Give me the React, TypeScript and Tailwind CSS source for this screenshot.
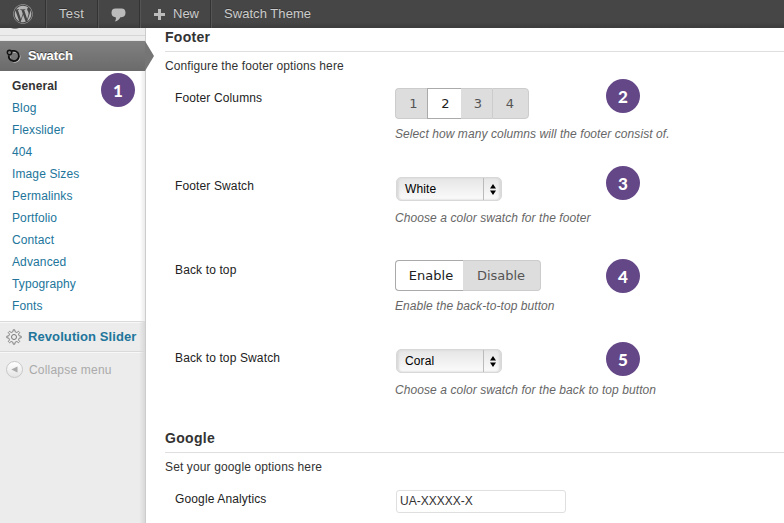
import type { ReactNode } from "react";
import { FaWordpress } from "react-icons/fa";

const HELV = "font-['Liberation_Sans',Arial,sans-serif]";

function Badge({ n, className }: { n: number; className: string }) {
  return (
    <span
      className={`absolute flex size-[34px] items-center justify-center rounded-full bg-[#644787] font-['Lato',sans-serif] text-[17px] leading-none font-black text-white ${className}`}
    >
      {n}
    </span>
  );
}

function BarItem({ children, className }: { children: ReactNode; className: string }) {
  return (
    <div className={`flex h-full shrink-0 items-center border-r border-[#333] shadow-[1px_0_0_#555] ${className}`}>
      {children}
    </div>
  );
}

function AdminBar() {
  return (
    <header className="relative z-10 flex h-7 shrink-0 items-center bg-linear-to-b from-[#464646] from-80% to-[#3c3c3c] text-[13px] leading-7 text-[#ccc] [text-shadow:0_-1px_0_#333]">
      <BarItem className="w-[46px] justify-center">
        <FaWordpress className="size-5 text-[#b4b4b4]" />
      </BarItem>
      <BarItem className="w-[52px] pl-[13px] tracking-[0.35px]">Test</BarItem>
      <BarItem className="w-[42px] justify-center">
        <svg width="15" height="14" viewBox="0 0 15 14" fill="#bbb" className="mt-0.5">
          <path d="M4.500.5h6C13.200.500 14.500 2 14.500 4.800S13.200 9.200 10.500 9.200H9.300C8.500 11.300 6.500 12.900 3.800 13.500 4.800 12.300 5.200 10.800 4.700 9.200 1.800 9.200.500 7.600.500 4.800S1.800.500 4.500.500z" />
        </svg>
      </BarItem>
      <BarItem className="w-[71px] pl-[14px]">
        <svg width="11" height="11" viewBox="0 0 11 11" fill="#bbb" className="mr-2">
          <path d="M4 0h3v4h4v3H7v4H4V7H0V4h4z" />
        </svg>
        New
      </BarItem>
      <div className="pl-[13px] tracking-[0.05px]">Swatch Theme</div>
    </header>
  );
}

const SUBMENU = [
  "Blog",
  "Flexslider",
  "404",
  "Image Sizes",
  "Permalinks",
  "Portfolio",
  "Contact",
  "Advanced",
  "Typography",
  "Fonts",
];

function Sidebar() {
  return (
    <aside className="relative flex w-[146px] shrink-0 flex-col border-r border-[#ccc] bg-[#ececec]">
      <div className="relative h-[13px] shrink-0 overflow-hidden border-b border-[#e4e4e4]">
        <div className="mt-[7px] h-px bg-[#d6d6d6]" />
        <span className="absolute -top-[7px] left-[7px] h-2 w-4 rounded-b-full bg-[#888]" />
      </div>
      <div className="relative flex h-[30px] shrink-0 items-center bg-linear-to-b from-[#808080] to-[#6b6b6b] pl-[6px] text-[13px] font-bold tracking-[-0.1px] text-white [text-shadow:0_-1px_0_#444]">
        <svg width="15" height="16" viewBox="0 0 15 16" fill="none" className="mr-[7px]">
          <g stroke="#c4c4c4" strokeWidth="1.500" transform="translate(.7 .9)">
            <path d="M6.500 3H8.500a5 5 0 1 1-5.400 4.500" />
          </g>
          <g stroke="#111" strokeWidth="1.900">
            <path d="M5.500 2.900H8.300a5.100 5.100 0 1 1-5.500 4.400" />
            <circle cx="3.500" cy="4.500" r="2.200" strokeWidth="1.400" />
          </g>
        </svg>
        Swatch
        <svg width="9" height="30" viewBox="0 0 9 30" className="absolute top-0 left-[145px]">
          <path d="M0 0 9 15 0 30z" fill="#757575" />
        </svg>
      </div>
      <nav className="relative flex h-[250px] shrink-0 flex-col bg-linear-to-l from-[#ebebeb] to-white to-[5px] pt-1 pl-3 text-[12px] leading-[22px] text-[#21759b]">
        <span className="font-bold tracking-[0.1px] text-[#333]">General</span>
        {SUBMENU.map((item) => (
          <span key={item} className="tracking-[0.12px]">
            {item}
          </span>
        ))}
        <Badge n={1} className="top-[2px] left-[101px]" />
      </nav>
      <div className="flex h-[31px] shrink-0 items-center border-t border-b border-[#dadada] pl-[6px] text-[13px] font-bold tracking-[0.09px] text-[#21759b] shadow-[inset_0_1px_0_#f8f8f8,0_1px_0_#f8f8f8]">
        <svg width="16" height="16" viewBox="0 0 16 16" fill="none" stroke="#777" className="mr-[6px] shrink-0">
          <path
            d="M6.900 2.800 7.200.800H8.800L9.100 2.800 10.900 3.500 12.500 2.300 13.700 3.500 12.500 5.100 13.200 6.900 15.200 7.200V8.800L13.200 9.100 12.500 10.900 13.700 12.500 12.500 13.700 10.900 12.500 9.100 13.200 8.800 15.200H7.200L6.900 13.200 5.100 12.500 3.500 13.700 2.300 12.500 3.500 10.900 2.800 9.100.800 8.800V7.200L2.800 6.900 3.500 5.100 2.300 3.500 3.500 2.300 5.100 3.500z"
            strokeWidth=".9"
            strokeLinejoin="round"
          />
          <circle cx="8" cy="8" r="2.500" strokeWidth="1" />
        </svg>
        <span className="whitespace-nowrap">Revolution Slider</span>
      </div>
      <div className="flex h-[35px] shrink-0 items-center pl-[6px] text-[12px] tracking-[0.2px] text-[#aaa]">
        <span className="mr-[6px] flex size-[17px] items-center justify-center rounded-full border border-[#c8c8c8] bg-linear-to-b from-white to-[#e4e4e4]">
          <svg width="7" height="7" viewBox="0 0 7 7">
            <path d="M6.500.5v6L.3 3.500z" fill="#aaa" />
          </svg>
        </span>
        Collapse menu
      </div>
      <div className="absolute top-[294px] right-0 bottom-0 w-[6px] bg-linear-to-l from-[#d8d8d8] to-transparent" />
    </aside>
  );
}

function Heading({ children }: { children: ReactNode }) {
  return (
    <h3 className="h-[24px] border-b border-[#dfdfdf] text-[14px] leading-[18px] font-bold tracking-[0.3px] text-[#333]">
      {children}
    </h3>
  );
}

function Row({ label, height, help, children }: { label: string; height: string; help?: string; children: ReactNode }) {
  return (
    <div className={`relative flex pl-[10px] ${height}`}>
      <div className="w-[220px] shrink-0 pt-[2px] text-[12px] leading-4 tracking-[0.13px] text-[#222]">{label}</div>
      <div className="flex flex-col items-start">
        {children}
        {help && (
          <p className="text-[12px] leading-4 tracking-[0.075px] whitespace-nowrap text-[#666] italic">{help}</p>
        )}
      </div>
    </div>
  );
}

function Select({ value }: { value: string }) {
  return (
    <div className="mt-px mb-[9px] ml-px flex h-6 w-[106px] items-center rounded-[5px] border border-[#d8d8d8] bg-linear-to-b from-[#e6e6e6] to-[#fbfbfb] pl-2 text-[12px] tracking-[0.1px] text-black shadow-[inset_2px_0_2px_#dadada,inset_-2px_0_2px_#dadada]">
      <span className="flex-1">{value}</span>
      <span className="flex h-full w-[18px] items-center justify-center border-l border-[#bbb]">
        <svg width="6" height="11" viewBox="0 0 6 11">
          <path d="M3 0 6 4.500H0zM3 11 0 6.500h6z" />
        </svg>
      </span>
    </div>
  );
}

const SEGMENT = "flex h-full items-center justify-center border-y";
const SEG_OFF = "border-[#ccc] bg-[#ddd] text-[#555]";
const SEG_ON = "border-[#aaa] bg-white text-[#212121]";

function Settings() {
  return (
    <main className="min-w-0 flex-1 bg-white pl-[19px]">
      <Heading>Footer</Heading>
      <p className="h-9 pt-[6px] text-[12px] leading-4 tracking-[0.1px] text-[#333]">
        Configure the footer options here
      </p>

      <Row label="Footer Columns" height="h-[88px]" help="Select how many columns will the footer consist of.">
        <div className="mb-[7px] flex h-[31px] font-['DejaVu_Sans',sans-serif] text-[13px]">
          <span className={`${SEGMENT} ${SEG_OFF} w-8 rounded-l-[4px] border-l pl-1`}>1</span>
          <span className={`${SEGMENT} ${SEG_ON} w-[34px] border-l pl-0.5`}>2</span>
          <span className={`${SEGMENT} ${SEG_OFF} w-[31px] pl-[3px]`}>3</span>
          <span className={`${SEGMENT} ${SEG_OFF} w-[37px] rounded-r-[4px] border-x pr-px`}>4</span>
        </div>
        <Badge n={2} className="top-[-9px] left-[441px]" />
      </Row>
      <Row label="Footer Swatch" height="h-[84px]" help="Choose a color swatch for the footer">
        <Select value="White" />
        <Badge n={3} className="top-[-10px] left-[441px]" />
      </Row>
      <Row label="Back to top" height="h-[88px]" help="Enable the back-to-top button">
        <div className="mb-[7px] flex h-[31px] font-['DejaVu_Sans',sans-serif] text-[13px]">
          <span className={`${SEGMENT} ${SEG_ON} w-[68px] rounded-l-[4px] border-l pl-[3px]`}>Enable</span>
          <span className={`${SEGMENT} ${SEG_OFF} w-[78px] rounded-r-[4px] border-r pr-px`}>Disable</span>
        </div>
        <Badge n={4} className="top-[-1px] left-[441px]" />
      </Row>
      <Row label="Back to top Swatch" height="h-[81px]" help="Choose a color swatch for the back to top button">
        <Select value="Coral" />
        <Badge n={5} className="top-[-6px] left-[441px]" />
      </Row>

      <Heading>Google</Heading>
      <p className="h-9 pt-[6px] text-[12px] leading-4 tracking-[0.13px] text-[#333]">Set your google options here</p>
      <Row label="Google Analytics" height="h-[34px]">
        <input
          defaultValue="UA-XXXXX-X"
          className="mt-px ml-px h-[23px] w-[170px] rounded-[3px] border border-[#dfdfdf] bg-white px-[3px] pb-0.5 text-[12px] text-[#333] outline-none"
        />
      </Row>
    </main>
  );
}

export default function App() {
  return (
    <div className={`flex h-[523px] w-[784px] flex-col overflow-hidden bg-white ${HELV}`}>
      <AdminBar />
      <div className="flex min-h-0 flex-1">
        <Sidebar />
        <Settings />
      </div>
    </div>
  );
}
